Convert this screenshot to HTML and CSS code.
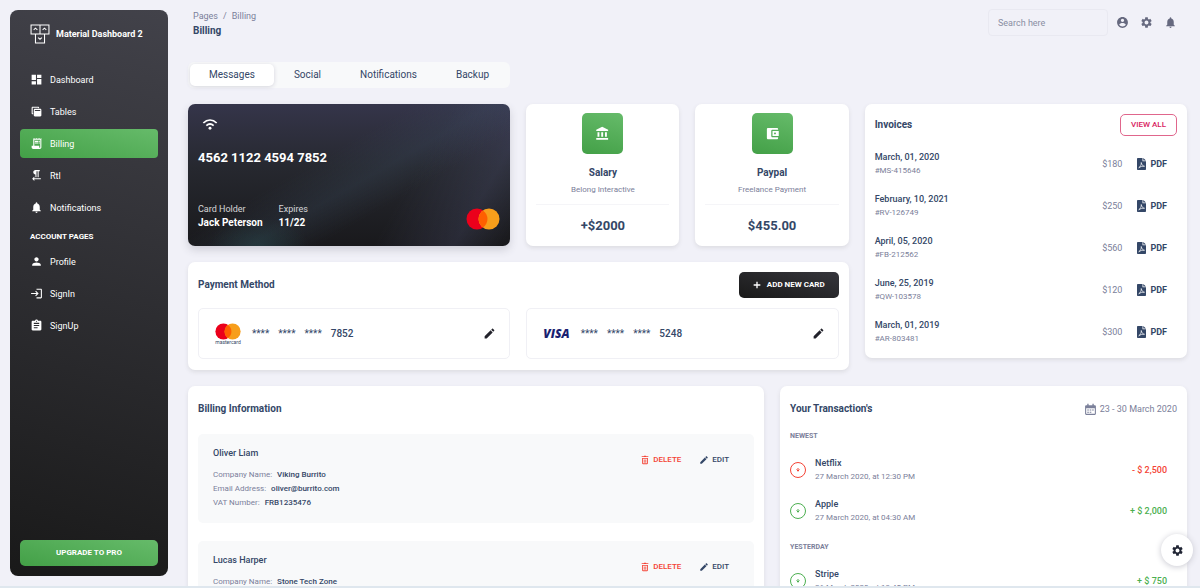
FILE: index.html
```html
<!DOCTYPE html>
<html lang="en">
  <head>
    <meta charset="UTF-8" />
    <meta name="viewport" content="width=device-width, initial-scale=1" />
    <title>Material Dashboard 2 - Billing</title>
    <link rel="stylesheet" href="styles.css">
  </head>
  <body>
    <!-- icon sprite -->
    <svg class="sprite" aria-hidden="true">
      <symbol id="i-dashboard" viewBox="0 0 24 24"><path d="M3 13h8V3H3v10zm0 8h8v-6H3v6zm10 0h8V11h-8v10zm0-18v6h8V3h-8z" /></symbol>
      <symbol id="i-table" viewBox="0 0 24 24"><path d="M19 7H9c-1.100 0-2 .9-2 2v10c0 1.100.9 2 2 2h10c1.100 0 2-.9 2-2V9c0-1.100-.9-2-2-2zm0 2v2H9V9h10z" /><path d="M6 17H5c-1.100 0-2-.9-2-2V5c0-1.100.9-2 2-2h10c1.100 0 2 .9 2 2v1h-2V5H5v10h1v2z" /></symbol>
      <symbol id="i-receipt" viewBox="0 0 24 24"><path d="M19.500 3.500L18 2l-1.500 1.500L15 2l-1.500 1.500L12 2l-1.500 1.500L9 2 7.500 3.500 6 2v14H3v3c0 1.660 1.340 3 3 3h12c1.660 0 3-1.340 3-3V2l-1.500 1.500zM19 19c0 .55-.45 1-1 1s-1-.45-1-1v-3H8V5h11v14z" /><path d="M9 7h6v2H9zM16 7h2v2h-2zM9 10h6v2H9zM16 10h2v2h-2z" /></symbol>
      <symbol id="i-rtl" viewBox="0 0 24 24"><path d="M10 10v5h2V4h2v11h2V4h2V2h-8C7.790 2 6 3.790 6 6s1.790 4 4 4zm-2 7v-3l-4 4 4 4v-3h12v-2H8z" /></symbol>
      <symbol id="i-bell" viewBox="0 0 24 24"><path d="M12 22c1.100 0 2-.9 2-2h-4c0 1.100.89 2 2 2zm6-6v-5c0-3.070-1.640-5.640-4.500-6.320V4c0-.83-.67-1.500-1.500-1.500s-1.500.67-1.500 1.500v.68C7.630 5.360 6 7.920 6 11v5l-2 2v1h16v-1l-2-2z" /></symbol>
      <symbol id="i-person" viewBox="0 0 24 24"><path d="M12 12c2.210 0 4-1.790 4-4s-1.790-4-4-4-4 1.790-4 4 1.790 4 4 4zm0 2c-2.670 0-8 1.340-8 4v2h16v-2c0-2.660-5.330-4-8-4z" /></symbol>
      <symbol id="i-login" viewBox="0 0 24 24"><path d="M11 7L9.600 8.400l2.600 2.600H2v2h10.200l-2.600 2.600L11 17l5-5-5-5zm9 12h-8v2h8c1.100 0 2-.9 2-2V5c0-1.100-.9-2-2-2h-8v2h8v14z" /></symbol>
      <symbol id="i-assignment" viewBox="0 0 24 24"><path d="M19 3h-4.180C14.400 1.840 13.300 1 12 1c-1.300 0-2.400.84-2.820 2H5c-1.100 0-2 .9-2 2v14c0 1.100.9 2 2 2h14c1.100 0 2-.9 2-2V5c0-1.100-.9-2-2-2zm-7 0c.55 0 1 .45 1 1s-.45 1-1 1-1-.45-1-1 .45-1 1-1zm2 14H7v-2h7v2zm3-4H7v-2h10v2zm0-4H7V7h10v2z" /></symbol>
      <symbol id="i-account" viewBox="0 0 24 24"><path d="M12 2C6.480 2 2 6.480 2 12s4.480 10 10 10 10-4.480 10-10S17.520 2 12 2zm0 3c1.660 0 3 1.340 3 3s-1.340 3-3 3-3-1.340-3-3 1.340-3 3-3zm0 14.200c-2.500 0-4.710-1.280-6-3.220.03-1.990 4-3.080 6-3.080 1.990 0 5.970 1.090 6 3.080-1.290 1.940-3.500 3.220-6 3.220z" /></symbol>
      <symbol id="i-settings" viewBox="0 0 24 24"><path d="M19.140 12.940c.04-.3.06-.61.06-.94 0-.32-.02-.64-.07-.94l2.030-1.580c.18-.14.23-.41.12-.61l-1.920-3.320c-.12-.22-.37-.29-.59-.22l-2.390.96c-.5-.38-1.030-.7-1.620-.94l-.36-2.540c-.04-.24-.24-.41-.48-.41h-3.840c-.24 0-.43.17-.47.41l-.36 2.540c-.59.24-1.130.57-1.620.94l-2.390-.96c-.22-.08-.47 0-.59.22L2.740 8.870c-.12.21-.08.47.12.61l2.030 1.580c-.05.3-.09.63-.09.94s.02.64.07.94l-2.030 1.580c-.18.14-.23.41-.12.61l1.920 3.320c.12.22.37.29.59.22l2.390-.96c.5.38 1.030.7 1.620.94l.36 2.540c.05.24.24.41.48.41h3.840c.24 0 .44-.17.47-.41l.36-2.540c.59-.24 1.130-.56 1.620-.94l2.390.96c.22.08.47 0 .59-.22l1.920-3.320c.12-.22.07-.47-.12-.61l-2.010-1.580zM12 15.600c-1.980 0-3.600-1.620-3.600-3.600s1.620-3.600 3.600-3.600 3.600 1.620 3.600 3.600-1.620 3.600-3.600 3.600z" /></symbol>
      <symbol id="i-bank" viewBox="0 0 24 24"><path d="M4 10v7h3v-7H4zm6 0v7h3v-7h-3zM2 22h19v-3H2v3zm14-12v7h3v-7h-3zm-4.500-9L2 6v2h19V6l-9.500-5z" /></symbol>
      <symbol id="i-wallet" viewBox="0 0 24 24"><path d="M21 18v1c0 1.100-.9 2-2 2H5c-1.110 0-2-.9-2-2V5c0-1.100.89-2 2-2h14c1.100 0 2 .9 2 2v1h-9c-1.110 0-2 .9-2 2v8c0 1.100.89 2 2 2h9zm-9-2h10V8H12v8zm4-2.500c-.83 0-1.500-.67-1.500-1.500s.67-1.500 1.500-1.500 1.500.67 1.500 1.500-.67 1.500-1.500 1.500z" /></symbol>
      <symbol id="i-edit" viewBox="0 0 24 24"><path d="M3 17.250V21h3.750L17.810 9.940l-3.750-3.750L3 17.250zM20.710 7.040c.39-.39.39-1.020 0-1.410l-2.340-2.340c-.39-.39-1.020-.39-1.410 0l-1.830 1.830 3.750 3.750 1.830-1.830z" /></symbol>
      <symbol id="i-delete" viewBox="0 0 24 24"><path d="M4 5V3h5l1-1h4l1 1h5v2zM5 7h14v13a2 2 0 0 1-2 2H7a2 2 0 0 1-2-2zm2 2v11h10V9z" fill-rule="evenodd" /><path d="M9 10.500h2v8H9zM13 10.500h2v8h-2z" /></symbol>
      <symbol id="i-wifi" viewBox="0 0 24 24"><path d="M2 10.500C8 4.500 16 4.500 22 10.500M6.500 14.500c3.300-3 7.700-3 11 0" fill="none" stroke="currentColor" stroke-width="2.600" /><circle cx="12" cy="18.500" r="2.200" /></symbol>
      <symbol id="i-plus" viewBox="0 0 24 24"><path d="M14 2v8h8v4h-8v8h-4v-8H2v-4h8V2z" /></symbol>
      <symbol id="i-pdf" viewBox="0 0 18 24"><path d="M1.500 0H11v6.500h7V22.500c0 .8-.7 1.500-1.500 1.500h-15C.7 24 0 23.300 0 22.500v-21C0 .7.7 0 1.500 0zM12.500 0L18 5.200h-5.500z" /><path d="M3.500 19.500c3-1.500 5.500-6 5-10.500 1 5 3 7 6.500 7.500-4-.5-8 .8-11.500 3z" fill="none" stroke="#fff" stroke-width="1.400" /></symbol>
      <symbol id="i-calendar" viewBox="0 0 24 24"><path d="M20 4h-2V1.500h-2.500V4h-7V1.500H6V4H4a2 2 0 0 0-2 2v14a2 2 0 0 0 2 2h16a2 2 0 0 0 2-2V6a2 2 0 0 0-2-2zm0 16H4V9.500h16zM6 12h3v2H6zm4.500 0h3v2h-3zm4.500 0h3v2h-3zm-9 4h3v2H6zm4.500 0h3v2h-3z" fill-rule="evenodd" /></symbol>
      <symbol id="i-arrow" viewBox="0 0 24 24"><path d="M12 4v14M6 10l6 6 6-6" fill="none" stroke="currentColor" stroke-width="4" /></symbol>
      <symbol id="i-circles" viewBox="0 0 34 22"><circle cx="11" cy="11" r="10.500" fill="#eb001b" /><circle cx="23" cy="11" r="10.500" fill="#f79e1b" /><path d="M17 2.400a10.500 10.500 0 0 1 0 17.200 10.500 10.500 0 0 1 0-17.200z" fill="#ff5f00" /></symbol>
    </svg>

    <div class="app">
      <aside class="sidebar">
        <a class="brand" href="#">
          <svg class="brand-logo" viewBox="0 0 19 19">
            <path d="M1 1h8.500v8.500H1zM9.500 1H18v8.500H9.500zM5.200 9.500h8.600V18H5.200zM3.500 5.500L5.200 4 7 5.500M12 5.500L13.700 4l1.800 1.500M7.700 13l1.800 1.500 1.800-1.500" />
          </svg>
          <span>Material Dashboard 2</span>
        </a>
        <nav class="nav">
          <a class="nav-link" href="#"><svg class="icon"><use href="#i-dashboard" /></svg>Dashboard</a>
          <a class="nav-link" href="#"><svg class="icon"><use href="#i-table" /></svg>Tables</a>
          <a class="nav-link active" href="#"><svg class="icon"><use href="#i-receipt" /></svg>Billing</a>
          <a class="nav-link" href="#"><svg class="icon"><use href="#i-rtl" /></svg>Rtl</a>
          <a class="nav-link" href="#"><svg class="icon"><use href="#i-bell" /></svg>Notifications</a>
          <h6 class="nav-title">Account Pages</h6>
          <a class="nav-link" href="#"><svg class="icon"><use href="#i-person" /></svg>Profile</a>
          <a class="nav-link" href="#"><svg class="icon"><use href="#i-login" /></svg>SignIn</a>
          <a class="nav-link" href="#"><svg class="icon"><use href="#i-assignment" /></svg>SignUp</a>
        </nav>
        <a class="upgrade" href="#">Upgrade to pro</a>
      </aside>

      <main class="main">
        <header class="topbar">
          <div>
            <div class="breadcrumb"><a href="#">Pages</a><span>/</span><span>Billing</span></div>
            <h1 class="page-title">Billing</h1>
          </div>
          <div class="tools">
            <input class="search" type="text" placeholder="Search here" aria-label="Search here" />
            <div class="tool-icons">
              <button type="button" aria-label="Account"><svg class="icon"><use href="#i-account" /></svg></button>
              <button type="button" aria-label="Settings"><svg class="icon"><use href="#i-settings" /></svg></button>
              <button type="button" aria-label="Notifications"><svg class="icon"><use href="#i-bell" /></svg></button>
            </div>
          </div>
        </header>

        <div class="tabs">
          <button class="tab active" type="button">Messages</button>
          <button class="tab" type="button">Social</button>
          <button class="tab" type="button">Notifications</button>
          <button class="tab" type="button">Backup</button>
        </div>

        <div class="grid">
          <div class="overview">
            <section class="credit">
              <svg class="wifi"><use href="#i-wifi" /></svg>
              <p class="credit-number">4562 1122 4594 7852</p>
              <div class="credit-foot">
                <div><small>Card Holder</small><b>Jack Peterson</b></div>
                <div><small>Expires</small><b>11/22</b></div>
                <svg class="credit-logo"><use href="#i-circles" /></svg>
              </div>
            </section>
            <section class="card stat">
              <span class="stat-icon"><svg class="icon"><use href="#i-bank" /></svg></span>
              <h2>Salary</h2>
              <p>Belong Interactive</p>
              <hr />
              <strong>+$2000</strong>
            </section>
            <section class="card stat">
              <span class="stat-icon"><svg class="icon"><use href="#i-wallet" /></svg></span>
              <h2>Paypal</h2>
              <p>Freelance Payment</p>
              <hr />
              <strong>$455.00</strong>
            </section>

            <section class="card payment">
              <div class="card-head">
                <h2>Payment Method</h2>
                <button class="btn-dark" type="button"><svg class="icon"><use href="#i-plus" /></svg>Add new card</button>
              </div>
              <div class="methods">
                <div class="method">
                  <span class="mc"><svg><use href="#i-circles" /></svg><i>mastercard</i></span>
                  <span class="digits"><span>****</span><span>****</span><span>****</span><b>7852</b></span>
                  <button class="method-edit" type="button" aria-label="Edit card"><svg class="icon"><use href="#i-edit" /></svg></button>
                </div>
                <div class="method">
                  <span class="visa">VISA</span>
                  <span class="digits"><span>****</span><span>****</span><span>****</span><b>5248</b></span>
                  <button class="method-edit" type="button" aria-label="Edit card"><svg class="icon"><use href="#i-edit" /></svg></button>
                </div>
              </div>
            </section>
          </div>

          <section class="card invoices">
            <div class="card-head">
              <h2>Invoices</h2>
              <button class="btn-outline" type="button">View all</button>
            </div>
            <ul class="invoice-list">
              <li><div><b>March, 01, 2020</b><small>#MS-415646</small></div><span>$180</span><a href="#"><svg><use href="#i-pdf" /></svg>PDF</a></li>
              <li><div><b>February, 10, 2021</b><small>#RV-126749</small></div><span>$250</span><a href="#"><svg><use href="#i-pdf" /></svg>PDF</a></li>
              <li><div><b>April, 05, 2020</b><small>#FB-212562</small></div><span>$560</span><a href="#"><svg><use href="#i-pdf" /></svg>PDF</a></li>
              <li><div><b>June, 25, 2019</b><small>#QW-103578</small></div><span>$120</span><a href="#"><svg><use href="#i-pdf" /></svg>PDF</a></li>
              <li><div><b>March, 01, 2019</b><small>#AR-803481</small></div><span>$300</span><a href="#"><svg><use href="#i-pdf" /></svg>PDF</a></li>
            </ul>
          </section>

          <section class="card billing">
            <h2>Billing Information</h2>
            <article class="bill">
              <div>
                <h3>Oliver Liam</h3>
                <p>Company Name: <b>Viking Burrito</b></p>
                <p>Email Address: <b>oliver@burrito.com</b></p>
                <p>VAT Number: <b>FRB1235476</b></p>
              </div>
              <div class="bill-actions">
                <button class="delete" type="button"><svg class="icon"><use href="#i-delete" /></svg>Delete</button>
                <button type="button"><svg class="icon"><use href="#i-edit" /></svg>Edit</button>
              </div>
            </article>
            <article class="bill">
              <div>
                <h3>Lucas Harper</h3>
                <p>Company Name: <b>Stone Tech Zone</b></p>
              </div>
              <div class="bill-actions">
                <button class="delete" type="button"><svg class="icon"><use href="#i-delete" /></svg>Delete</button>
                <button type="button"><svg class="icon"><use href="#i-edit" /></svg>Edit</button>
              </div>
            </article>
          </section>

          <section class="card transactions">
            <div class="trans-head">
              <h2>Your Transaction's</h2>
              <span><svg class="icon"><use href="#i-calendar" /></svg>23 - 30 March 2020</span>
            </div>
            <h4>Newest</h4>
            <div class="trans out">
              <span class="trans-icon"><svg><use href="#i-arrow" /></svg></span>
              <div><b>Netflix</b><small>27 March 2020, at 12:30 PM</small></div>
              <strong>- $ 2,500</strong>
            </div>
            <div class="trans">
              <span class="trans-icon"><svg><use href="#i-arrow" /></svg></span>
              <div><b>Apple</b><small>27 March 2020, at 04:30 AM</small></div>
              <strong>+ $ 2,000</strong>
            </div>
            <h4>Yesterday</h4>
            <div class="trans">
              <span class="trans-icon"><svg><use href="#i-arrow" /></svg></span>
              <div><b>Stripe</b><small>26 March 2020, at 13:45 PM</small></div>
              <strong>+ $ 750</strong>
            </div>
          </section>
        </div>
      </main>
    </div>

    <button class="configurator" type="button" aria-label="Open configurator"><svg class="icon"><use href="#i-settings" /></svg></button>
  </body>
</html>
```
FILE: styles.css
```css
* {
  box-sizing: border-box;
  padding: 0;
  margin: 0;
}

body {
  font-family: Roboto, sans-serif;
  font-size: 9px;
  line-height: 14px;
  color: #344767;
  background-color: #f1f1f8;
}

a {
  color: inherit;
  text-decoration: none;
}

button {
  display: flex;
  align-items: center;
  border: 0;
  background: none;
  color: inherit;
  font: inherit;
  cursor: pointer;
}

ul {
  list-style: none;
}

.sprite {
  display: none;
}

.icon {
  width: 13px;
  height: 13px;
  flex-shrink: 0;
  fill: currentColor;
}

.app {
  display: flex;
  height: 100vh;
  overflow: hidden;
  border-bottom: 2px solid #dfe7ee;
}

/* sidebar */
.sidebar {
  display: flex;
  flex-direction: column;
  flex: 0 0 158px;
  margin: 10px 0 10px 10px;
  padding: 14px 10px 10px;
  border-radius: 8px;
  color: #fff;
  background: linear-gradient(195deg, #42424a, #191919);
}

.brand {
  display: flex;
  align-items: center;
  gap: 6px;
  padding-left: 10px;
  font-weight: 700;
}

.brand-logo {
  width: 20px;
  height: 20px;
  fill: none;
  stroke: #fff;
}

.nav {
  display: flex;
  flex-direction: column;
  gap: 3px;
  flex-grow: 1;
  margin-top: 21px;
}

.nav-link {
  display: flex;
  align-items: center;
  gap: 7px;
  height: 29px;
  padding-left: 10px;
  border-radius: 4px;
}

.nav-link.active,
.upgrade {
  background: linear-gradient(195deg, #66bb6a, #43a047);
}

.nav-title {
  padding: 5px 10px 0;
  font-size: 8px;
  text-transform: uppercase;
}

.upgrade {
  padding: 6px;
  border-radius: 5px;
  font-size: 8px;
  font-weight: 700;
  text-align: center;
  text-transform: uppercase;
}

/* content */
.main {
  flex: 1;
  min-width: 0;
  padding: 9px 13px 0 20px;
}

.topbar {
  display: flex;
  justify-content: space-between;
  align-items: flex-start;
  padding-left: 5px;
}

.breadcrumb {
  display: flex;
  gap: 5px;
  color: #7b809a;
}

.page-title {
  font-size: 10px;
  line-height: 16px;
}

.tools {
  display: flex;
  align-items: center;
  gap: 8px;
  padding-right: 10px;
}

.tool-icons {
  display: flex;
  gap: 11px;
  color: #66697f;
}

.search {
  width: 120px;
  height: 27px;
  padding: 0 9px;
  border: 1px solid #e9e9f1;
  border-radius: 4px;
  background: transparent;
  font: inherit;
}

.search::placeholder {
  color: #8a8ea3;
}

.tabs {
  display: flex;
  gap: 1px;
  width: fit-content;
  margin: 23px 0 16px;
  padding: 2px;
  border-radius: 6px;
  background: #f8f9fa;
}

.tab {
  padding: 4px 19px;
  border-radius: 5px;
  font-size: 10px;
}

.tab.active {
  background: #fff;
  box-shadow: 0 1px 4px #d4d4dc;
}

.grid {
  display: grid;
  grid-template-columns: repeat(12, 1fr);
  gap: 16px;
  align-items: start;
}

.card {
  border-radius: 7px;
  background: #fff;
  box-shadow: 0 2px 4px #dcdce2;
}

h2 {
  font-size: 10px;
  line-height: 16px;
}

.card-head {
  display: flex;
  justify-content: space-between;
  align-items: center;
}

.overview {
  grid-column: span 8;
  display: grid;
  grid-template-columns: repeat(4, 1fr);
  gap: 16px;
}

/* credit card */
.credit {
  grid-column: span 2;
  display: flex;
  flex-direction: column;
  padding: 12px 10px 16px;
  border-radius: 7px;
  color: #fff;
  background:
    radial-gradient(ellipse at 22% 100%, rgba(40, 72, 76, 0.5), transparent 14%),
    linear-gradient(150deg, transparent 40%, rgba(60, 78, 98, 0.25) 54%, transparent 66%),
    linear-gradient(120deg, transparent 66%, rgba(76, 80, 112, 0.3) 86%, transparent 98%),
    linear-gradient(180deg, #35354a, #26282f 45%, #19191c);
  box-shadow: 0 4px 8px #cfcfd8;
}

.wifi {
  width: 16px;
  height: 16px;
  margin-left: 4px;
  fill: currentColor;
}

.credit-number {
  margin-top: 17px;
  font-size: 13px;
  font-weight: 700;
  line-height: 18px;
}

.credit-foot {
  display: flex;
  gap: 16px;
  margin-top: auto;
}

.credit-foot small {
  display: block;
  font-size: 9px;
  opacity: 0.8;
}

.credit-foot b {
  font-size: 10px;
}

.credit-logo {
  width: 34px;
  height: 22px;
  margin: 6px 0 0 auto;
}

/* salary, paypal */
.stat {
  display: flex;
  flex-direction: column;
  align-items: center;
  padding: 9px 10px 11px;
}

.stat-icon {
  display: flex;
  align-items: center;
  justify-content: center;
  width: 41px;
  height: 41px;
  margin-bottom: 11px;
  border-radius: 5px;
  color: #fff;
  background: linear-gradient(195deg, #66bb6a, #43a047);
}

.stat-icon .icon {
  width: 15px;
  height: 15px;
}

.stat p {
  margin-top: 2px;
  font-size: 8px;
  color: #7b809a;
}

.stat hr {
  width: 100%;
  margin: 7px 0 12px;
  border: 0;
  border-top: 1px solid #f5f5f8;
}

.stat strong {
  font-size: 13px;
  line-height: 18px;
}

/* payment method */
.payment {
  grid-column: 1 / -1;
  padding: 10px 10px 11px;
}

.btn-dark {
  gap: 6px;
  height: 26px;
  padding: 0 14px;
  border-radius: 5px;
  color: #fff;
  background: linear-gradient(195deg, #36363c, #191919);
  font-size: 8px;
  font-weight: 700;
  text-transform: uppercase;
}

.btn-dark .icon {
  width: 8px;
  height: 8px;
}

.methods {
  display: grid;
  grid-template-columns: 1fr 1fr;
  gap: 16px;
  margin-top: 10px;
}

.method {
  display: flex;
  align-items: center;
  height: 51px;
  padding: 0 13px 0 16px;
  border: 1px solid #f0f0f5;
  border-radius: 5px;
}

.mc {
  display: flex;
  flex-direction: column;
  align-items: center;
}

.mc svg {
  width: 26px;
  height: 17px;
}

.mc i {
  font-size: 5px;
  font-style: normal;
  line-height: 5px;
}

.visa {
  color: #1a1f71;
  font-family: "Open Sans", sans-serif;
  font-size: 12px;
  font-style: italic;
  font-weight: 800;
}

.digits {
  display: flex;
  gap: 9px;
  margin-left: 11px;
  font-size: 10px;
}

.digits b {
  font-weight: 500;
}

.method-edit {
  margin-left: auto;
  color: #22222b;
}

/* invoices */
.invoices {
  grid-column: span 4;
  padding: 10px 10px 5px;
}

.btn-outline {
  height: 22px;
  padding: 0 10px;
  border: 1px solid #e0668c;
  border-radius: 5px;
  color: #d81b60;
  font-size: 8px;
  font-weight: 500;
  text-transform: uppercase;
}

.invoice-list {
  margin-top: 7px;
}

.invoice-list li {
  display: flex;
  align-items: center;
  height: 42px;
  padding-right: 10px;
}

.invoice-list b,
.invoice-list small {
  display: block;
  font-weight: 500;
}

.invoice-list small {
  color: #7b809a;
  font-size: 8px;
  font-weight: 400;
}

.invoice-list span {
  margin-left: auto;
  color: #7b809a;
}

.invoice-list a {
  display: flex;
  align-items: center;
  gap: 4px;
  margin-left: 15px;
  font-weight: 700;
}

.invoice-list svg {
  width: 9px;
  height: 12px;
  fill: currentColor;
}

/* billing information */
.billing {
  grid-column: span 7;
  padding: 15px 10px;
}

.billing h2 {
  margin-bottom: 17px;
}

.bill {
  display: flex;
  justify-content: space-between;
  margin-bottom: 18px;
  padding: 12px 25px 13px 15px;
  border-radius: 5px;
  background: #f8f9fa;
}

.bill h3 {
  margin-bottom: 8px;
  font-size: 9px;
  font-weight: 500;
}

.bill p {
  color: #7b809a;
  font-size: 8px;
}

.bill b {
  margin-left: 3px;
  color: #344767;
  font-weight: 500;
}

.bill-actions {
  display: flex;
  gap: 18px;
  align-items: center;
  height: 14px;
  margin-top: 7px;
}

.bill-actions button {
  gap: 3px;
  font-size: 8px;
  font-weight: 500;
  text-transform: uppercase;
}

.bill-actions .icon {
  width: 10px;
  height: 10px;
}

.bill-actions .delete {
  color: #f44335;
}

/* transactions */
.transactions {
  grid-column: span 5;
  padding: 15px 10px;
}

.trans-head {
  display: flex;
  justify-content: space-between;
  align-items: center;
}

.trans-head span {
  display: flex;
  align-items: center;
  gap: 3px;
  color: #7b809a;
}

.transactions h4 {
  margin: 12px 0 6px;
  color: #7b809a;
  font-size: 7px;
  font-weight: 700;
  text-transform: uppercase;
}

.transactions .trans + h4 {
  margin-top: 9px;
}

.trans {
  display: flex;
  align-items: center;
  gap: 9px;
  height: 41px;
  padding-right: 10px;
  color: #4caf50;
}

.trans-icon {
  display: flex;
  align-items: center;
  justify-content: center;
  width: 16px;
  height: 16px;
  border: 1px solid currentColor;
  border-radius: 50%;
}

.trans-icon svg {
  width: 6px;
  height: 6px;
}

.trans b,
.trans small {
  display: block;
  color: #344767;
  font-weight: 500;
}

.trans small {
  color: #7b809a;
  font-size: 8px;
  font-weight: 400;
}

.trans strong {
  margin-left: auto;
  font-weight: 500;
}

.trans.out {
  color: #f44335;
}

.configurator {
  position: fixed;
  right: 7px;
  bottom: 22px;
  justify-content: center;
  width: 32px;
  height: 32px;
  border-radius: 50%;
  color: #1f2433;
  background: #fff;
  box-shadow: 0 1px 6px #c8c8d0;
}
```
